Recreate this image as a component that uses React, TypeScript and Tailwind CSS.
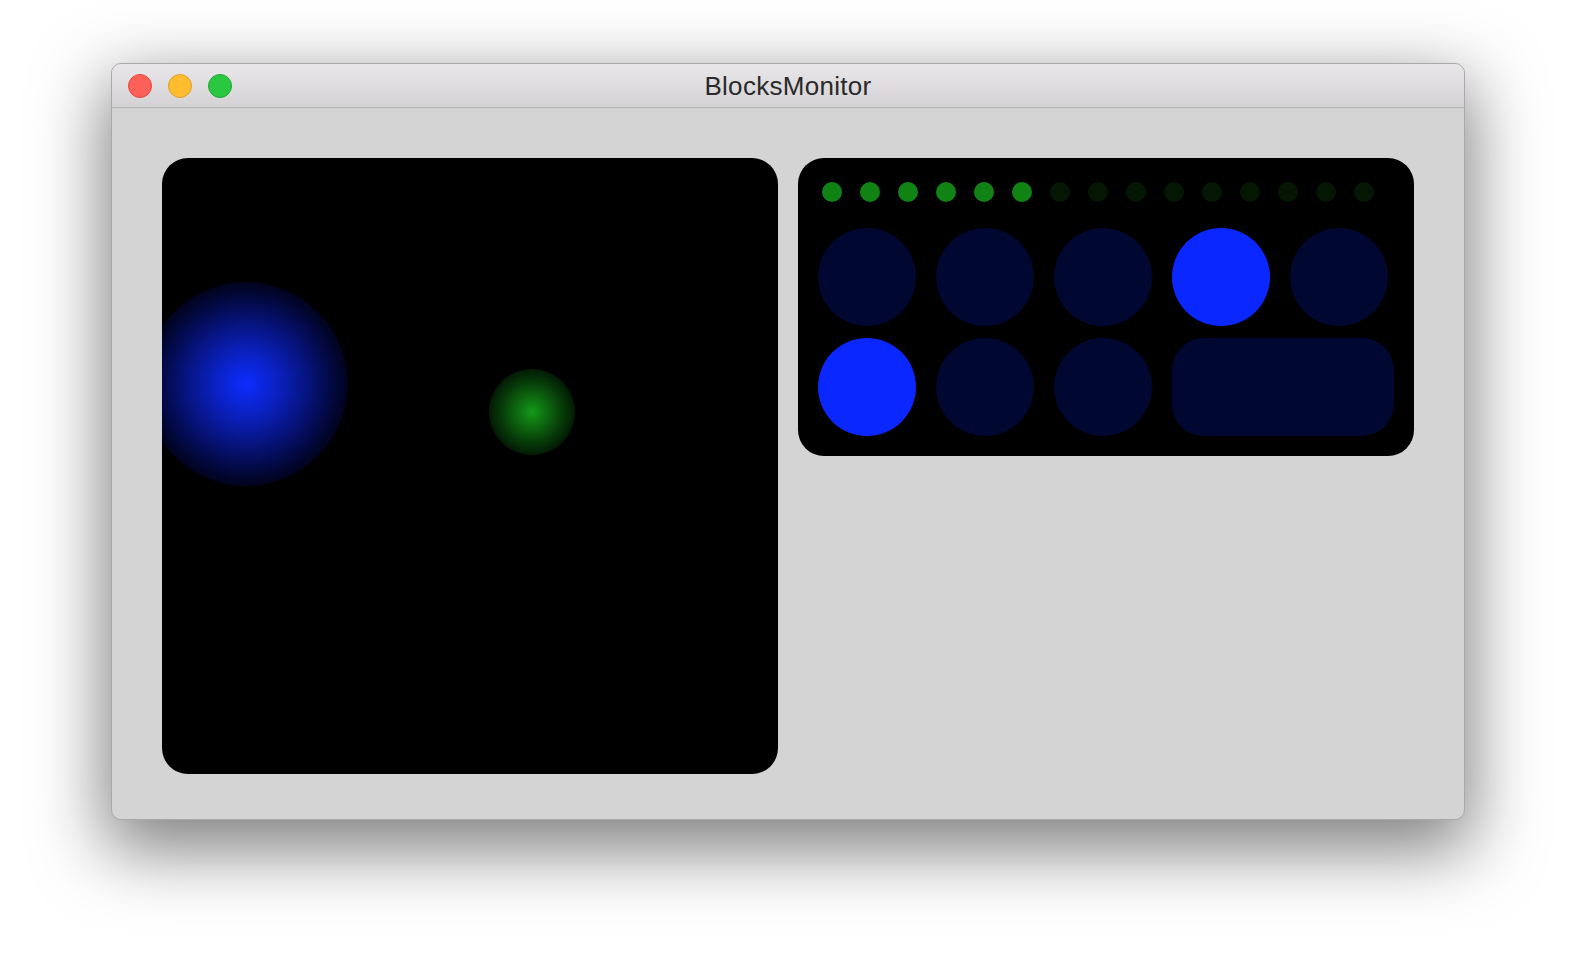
import React from "react";

const dots = Array.from({ length: 15 }, (_, i) => i < 6);

function Pad({ on }: { on: boolean }) {
  return (
    <div
      className={
        "w-[98px] h-[98px] rounded-full " + (on ? "bg-[#0b27ff]" : "bg-[#000730]")
      }
    />
  );
}

export default function App() {
  return (
    <div className="w-full h-[980px] bg-white flex justify-center pt-[63px] overflow-hidden">
      <div className="w-[1354px] h-[757px] flex flex-col rounded-[10px] overflow-hidden border border-[#a9a9a9] shadow-[0_24px_70px_6px_rgba(0,0,0,0.5)] bg-[#d4d4d4]">
        <div className="relative h-[44px] shrink-0 flex items-center bg-gradient-to-b from-[#e9e7e9] to-[#d4d2d4] border-b border-[#b4b4b4]">
          <div className="flex items-center gap-[16px] pl-[16px]">
            <div className="w-[24px] h-[24px] rounded-full bg-[#fe5f57] border border-[#e1483f]" />
            <div className="w-[24px] h-[24px] rounded-full bg-[#febc2e] border border-[#dfa023]" />
            <div className="w-[24px] h-[24px] rounded-full bg-[#29c840] border border-[#1ea833]" />
          </div>
          <div
            className="absolute inset-0 flex items-center justify-center text-[26px] text-[#2a2a2a] pt-[2px]"
            style={{ fontFamily: '"Liberation Sans", Arial, sans-serif', letterSpacing: "0.3px" }}
          >
            BlocksMonitor
          </div>
        </div>
        <div className="flex-1 flex items-start gap-[20px] pt-[50px] pl-[50px]">
          <div className="relative w-[616px] h-[616px] rounded-[26px] bg-black overflow-hidden">
            <div
              className="absolute left-[-18px] top-[124px] w-[204px] h-[204px] rounded-full"
              style={{
                background:
                  "radial-gradient(circle closest-side, #0d2cff 0%, #0a20bc 33%, #061276 63%, #020738 88%, #01031c 100%)",
              }}
            />
            <div
              className="absolute left-[327px] top-[211px] w-[86px] h-[86px] rounded-full"
              style={{
                background:
                  "radial-gradient(circle closest-side, #149a18 0%, #0d6a10 35%, #073d09 70%, #031a04 100%)",
              }}
            />
          </div>
          <div className="w-[616px] h-[298px] rounded-[26px] bg-black pt-[24px] pl-[20px] flex flex-col">
            <div className="flex gap-[18px] pl-[4px]">
              {dots.map((on, i) => (
                <div
                  key={i}
                  className={"w-[20px] h-[20px] rounded-full " + (on ? "bg-[#108314]" : "bg-[#031703]")}
                />
              ))}
            </div>
            <div className="flex gap-[20px] mt-[26px]">
              <Pad on={false} />
              <Pad on={false} />
              <Pad on={false} />
              <Pad on={true} />
              <Pad on={false} />
            </div>
            <div className="flex gap-[20px] mt-[12px]">
              <Pad on={true} />
              <Pad on={false} />
              <Pad on={false} />
              <div className="w-[222px] h-[98px] rounded-[32px] bg-[#000730]" />
            </div>
          </div>
        </div>
      </div>
    </div>
  );
}
